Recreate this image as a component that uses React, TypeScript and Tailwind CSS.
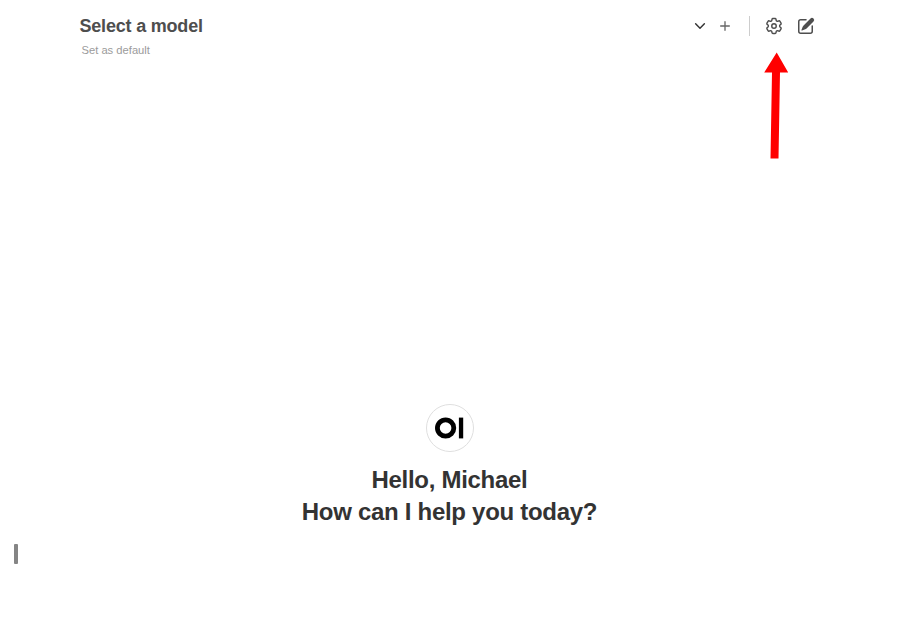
import React from "react";

function ChevronIcon() {
  return (
    <svg className="size-3.5" viewBox="0 0 24 24" fill="none" stroke="currentColor" strokeWidth="2.5" strokeLinecap="round" strokeLinejoin="round">
      <path d="m4.5 8.25 7.5 7.5 7.5-7.5" />
    </svg>
  );
}

function PlusIcon() {
  return (
    <svg className="size-4" viewBox="0 0 24 24" fill="none" stroke="currentColor" strokeWidth="2" strokeLinecap="round">
      <path d="M12 5.5v13M5.5 12h13" />
    </svg>
  );
}

function GearIcon() {
  return (
    <svg className="size-5" viewBox="0 0 24 24" fill="none" stroke="currentColor" strokeWidth="1.7" strokeLinecap="round" strokeLinejoin="round">
      <path d="M9.594 3.94c.09-.542.56-.94 1.11-.94h2.593c.55 0 1.02.398 1.11.94l.213 1.281c.063.374.313.686.645.87.074.04.147.083.22.127.325.196.72.257 1.075.124l1.217-.456a1.125 1.125 0 0 1 1.37.49l1.296 2.247a1.125 1.125 0 0 1-.26 1.431l-1.003.827c-.293.241-.438.613-.43.992a7.723 7.723 0 0 1 0 .255c-.008.378.137.75.43.991l1.004.827c.424.35.534.955.26 1.43l-1.298 2.247a1.125 1.125 0 0 1-1.369.491l-1.217-.456c-.355-.133-.75-.072-1.076.124a6.47 6.47 0 0 1-.22.128c-.331.183-.581.495-.644.869l-.213 1.281c-.09.543-.56.94-1.11.94h-2.594c-.55 0-1.019-.398-1.11-.94l-.213-1.281c-.062-.374-.312-.686-.644-.87a6.52 6.52 0 0 1-.22-.127c-.325-.196-.72-.257-1.076-.124l-1.217.456a1.125 1.125 0 0 1-1.369-.49l-1.297-2.247a1.125 1.125 0 0 1 .26-1.431l1.004-.827c.292-.24.437-.613.43-.991a6.932 6.932 0 0 1 0-.255c.007-.38-.138-.751-.43-.992l-1.004-.827a1.125 1.125 0 0 1-.26-1.43l1.297-2.247a1.125 1.125 0 0 1 1.37-.491l1.216.456c.356.133.751.072 1.076-.124.072-.044.146-.086.22-.128.332-.183.582-.495.644-.869l.214-1.28Z" />
      <circle cx="12" cy="12" r="2.7" />
    </svg>
  );
}

function ComposeIcon() {
  return (
    <svg className="size-5" viewBox="0 0 20 20" fill="currentColor">
      <path d="m5.433 13.917 1.262-3.155A4 4 0 0 1 7.58 9.42l6.92-6.918a2.121 2.121 0 0 1 3 3l-6.92 6.918c-.383.383-.84.685-1.343.886l-3.154 1.262a.5.5 0 0 1-.65-.65Z" />
      <path d="M3.5 5.75c0-.69.56-1.25 1.25-1.25H10A.75.75 0 0 0 10 3H4.75A2.75 2.75 0 0 0 2 5.75v9.5A2.75 2.75 0 0 0 4.75 18h9.5A2.75 2.75 0 0 0 17 15.25V10a.75.75 0 0 0-1.5 0v5.25c0 .69-.56 1.25-1.25 1.25h-9.5c-.69 0-1.25-.56-1.25-1.25v-9.5Z" />
    </svg>
  );
}

export default function App() {
  return (
    <div className="relative flex h-[638px] w-[899px] flex-col overflow-hidden bg-white font-['Liberation_Sans',Arial,sans-serif]">
      <header className="flex h-[60px] items-start pr-[83px] pl-[79.5px] text-[#4e4e4e]">
        <div className="flex-1 pt-3">
          <button className="block text-lg leading-7 font-bold tracking-[-0.2px]">Select a model</button>
          <button className="ml-0.5 block text-[11.2px] leading-5 text-[#9b9b9b]">Set as default</button>
        </div>
        <div className="flex h-[52px] items-center">
          <button aria-label="Choose model" className="text-[#333]"><ChevronIcon /></button>
          <button aria-label="Add model" className="ml-2.5 text-[#676767]"><PlusIcon /></button>
          <div className="ml-4 h-5 w-px bg-[#cdcdcd]" />
          <button aria-label="Settings" className="ml-3.5"><GearIcon /></button>
          <button aria-label="New chat" className="ml-3"><ComposeIcon /></button>
        </div>
      </header>

      <main className="flex flex-col items-center pt-[344px] text-[#333]">
        <svg className="size-12" viewBox="0 0 48 48" role="img" aria-label="Open WebUI">
          <circle cx="24" cy="24" r="23.5" fill="#fff" stroke="#dfdfdf" />
          <circle cx="19.6" cy="24" r="8.2" fill="none" stroke="#000" strokeWidth="4.8" />
          <rect x="32.9" y="13.6" width="4.3" height="20.8" fill="#000" />
        </svg>
        <h1 className="mt-3 text-center text-2xl leading-8 font-bold tracking-[-0.29px]">
          Hello, Michael
          <br />
          How can I help you today?
        </h1>
      </main>

      <div className="mt-4 ml-3.5 h-5 w-1 rounded-[1px] bg-[#858585]" />

      <svg className="absolute top-[52px] left-[763px] h-[108px] w-[26px]" viewBox="0 0 26 108" fill="#f00">
        <path d="M13.7 .5 25.2 20.5H17L15.5 106.5H7.5L9 20.5H1.2Z" />
      </svg>
    </div>
  );
}
